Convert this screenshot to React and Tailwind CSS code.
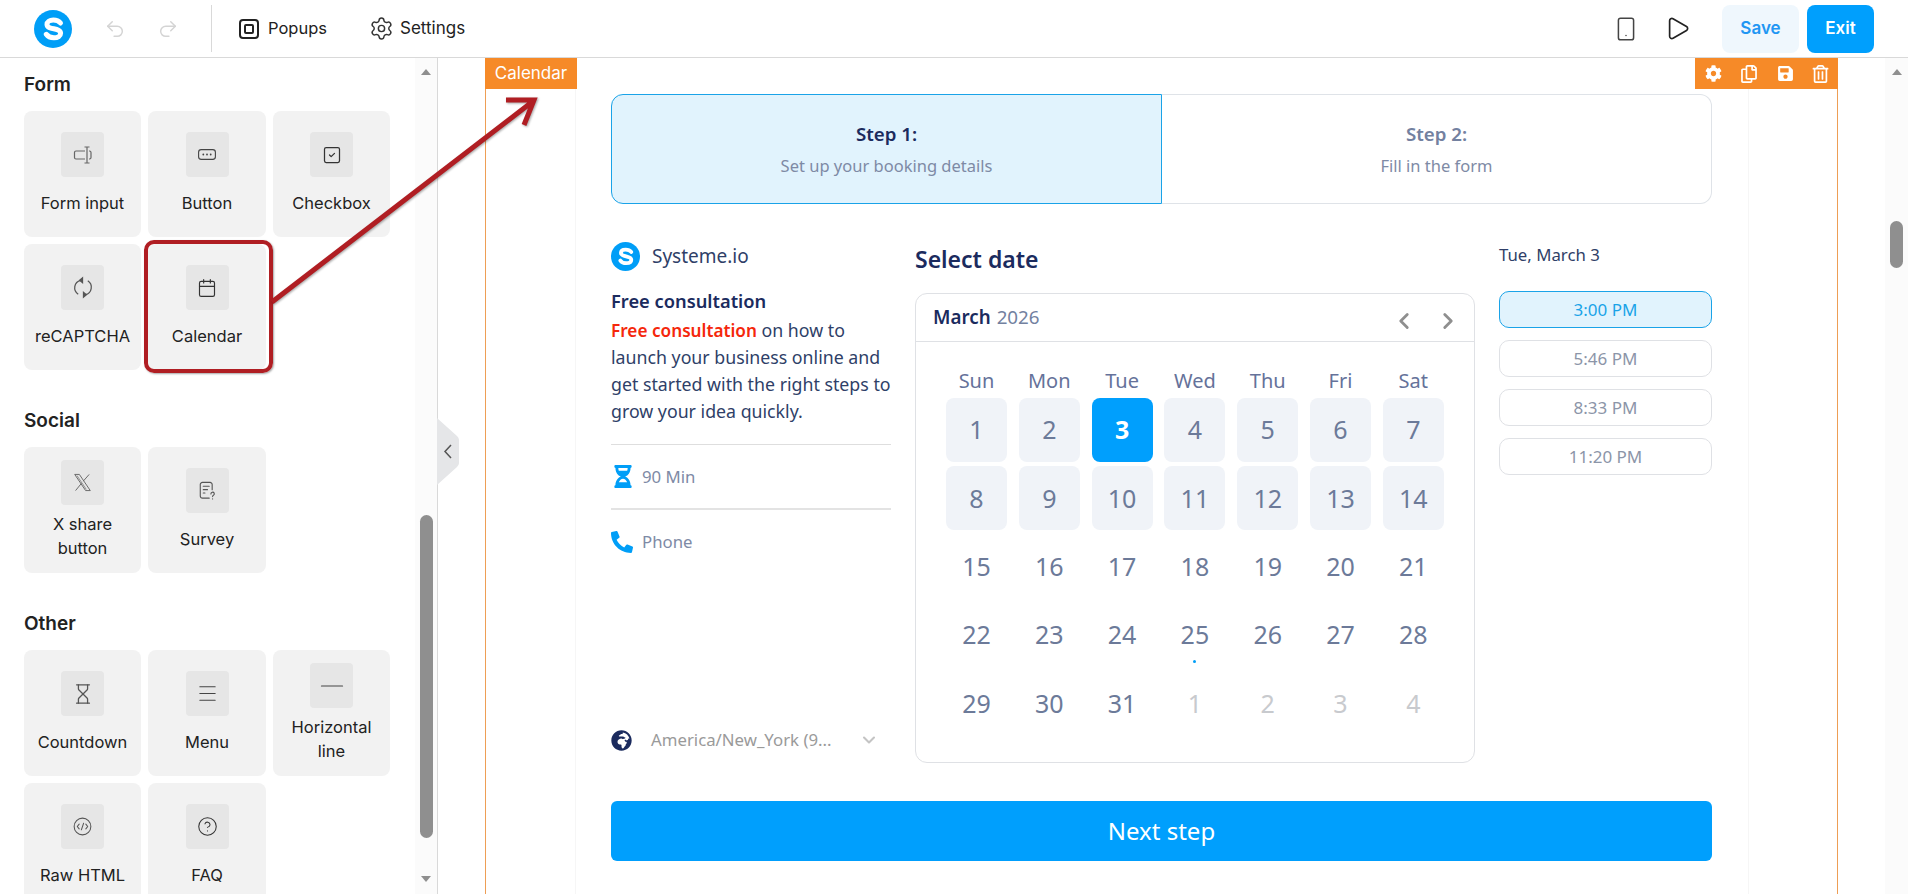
import { Undo2, Redo2, Settings, Smartphone, Play, SquareCheck, Calendar, Hourglass, Menu, Minus, CircleHelp, ChevronLeft, ChevronRight, ChevronDown } from 'lucide-react';
import { FaCog, FaRegCopy, FaSave, FaRegTrashAlt, FaHourglassHalf, FaPhoneAlt, FaGlobeAfrica } from 'react-icons/fa';

const Logo = ({ className }) => (
  <svg viewBox="0 0 38 38" className={className}>
    <circle cx="19" cy="19" r="19" fill="#009ef7" />
    <path d="M26.500 13c-1.500-1.900-4.200-3-7.200-3-3.700 0-6.300 1.700-6.300 4.400 0 5.800 13.600 3 13.600 8.900 0 2.800-2.800 4.500-6.700 4.500-3.200 0-6-1.200-7.600-3.500" fill="none" stroke="#fff" strokeWidth="5" strokeLinecap="round" />
  </svg>
);

const FormInputIcon = () => (
  <svg viewBox="0 0 20 18" className="w-[20px] h-[18px]" fill="none" stroke="#666" strokeWidth="1.200">
    <path d="M12 5H3a1.500 1.500 0 0 0-1.500 1.500v5A1.500 1.500 0 0 0 3 13h9" />
    <path d="M14 1v16M11.500 1h5M11.500 17h5" />
    <path d="M16 5h.5A1.500 1.500 0 0 1 18 6.500v5a1.500 1.500 0 0 1-1.500 1.500H16" />
  </svg>
);

const ButtonIcon = () => (
  <svg viewBox="0 0 18 11" className="w-[18px] h-[11px]" fill="none" stroke="#444" strokeWidth="1.100">
    <rect x="0.600" y="0.600" width="16.800" height="9.800" rx="2.600" />
    <circle cx="5.300" cy="5.500" r="0.900" fill="#444" stroke="none" />
    <circle cx="9" cy="5.500" r="0.900" fill="#444" stroke="none" />
    <circle cx="12.700" cy="5.500" r="0.900" fill="#444" stroke="none" />
  </svg>
);

const RecaptchaIcon = () => (
  <svg viewBox="0 0 20 24" className="w-[20px] h-[23px]" fill="none" stroke="#555" strokeWidth="1.300">
    <path d="M7.500 4.500A8 8 0 0 0 5 19" />
    <path d="M12.500 19.500A8 8 0 0 0 15 5" />
    <path d="M9.500 2v5l-3-2.500z" fill="#555" />
    <path d="M10.500 22v-5l3 2.500z" fill="#555" />
  </svg>
);

const XIcon = () => (
  <svg viewBox="0 0 20 20" className="w-[19px] h-[19px]" fill="none" stroke="#666" strokeWidth="1">
    <path d="M1.800 1.500h4.900l11.500 17h-4.900z" />
    <path d="M17 1.500 10.800 8.600M8.900 10.900 2.700 18.500" />
    <path d="M4.200 2.700 14 17.300" strokeWidth="0.700" />
  </svg>
);

const SurveyIcon = () => (
  <svg viewBox="0 0 20 22" className="w-[17px] h-[19px]" fill="none" stroke="#555" strokeWidth="1.300" strokeLinecap="round">
    <path d="M12 20H4a2.500 2.500 0 0 1-2.500-2.500V4A2.500 2.500 0 0 1 4 1.500h9A2.500 2.500 0 0 1 15.500 4v6" />
    <path d="M5 6h7M5 10h5M5 14h2" />
    <path d="M14 15a2 2 0 1 1 3 1.700c-.7.400-1 .8-1 1.500M16 20.800v.1" />
  </svg>
);

const CodeCircleIcon = () => (
  <svg viewBox="0 0 20 20" className="w-[19px] h-[19px]" fill="none" stroke="#555" strokeWidth="1.100" strokeLinecap="round" strokeLinejoin="round">
    <circle cx="10" cy="10" r="8.800" />
    <path d="M6.500 7.500 4.500 10l2 2.500M13.500 7.500l2 2.500-2 2.500M11.200 6.500 8.800 13.500" />
  </svg>
);

const sections = [
  {
    title: 'Form',
    cls: 'mt-0',
    items: [
      { label: 'Form input', icon: <FormInputIcon /> },
      { label: 'Button', icon: <ButtonIcon /> },
      { label: 'Checkbox', icon: <SquareCheck className="w-[20px] h-[20px] text-[#333]" strokeWidth={1.5} /> },
      { label: 'reCAPTCHA', icon: <RecaptchaIcon /> },
      { label: 'Calendar', icon: <Calendar className="w-[20px] h-[20px] text-[#333]" strokeWidth={1.4} /> },
    ],
  },
  {
    title: 'Social',
    cls: 'mt-[39px]',
    items: [
      { label: 'X share\nbutton', two: true, icon: <XIcon /> },
      { label: 'Survey', icon: <SurveyIcon /> },
    ],
  },
  {
    title: 'Other',
    cls: 'mt-[39px]',
    items: [
      { label: 'Countdown', icon: <Hourglass className="w-[22px] h-[22px] text-[#555]" strokeWidth={1.4} /> },
      { label: 'Menu', icon: <Menu className="w-[23px] h-[23px] text-[#444]" strokeWidth={1.1} /> },
      { label: 'Horizontal\nline', two: true, icon: <Minus className="w-[36px] h-[36px] text-[#444]" strokeWidth={0.8} /> },
      { label: 'Raw HTML', icon: <CodeCircleIcon /> },
      { label: 'FAQ', icon: <CircleHelp className="w-[21px] h-[21px] text-[#333]" strokeWidth={1.2} /> },
    ],
  },
];

const weekdays = ['Sun', 'Mon', 'Tue', 'Wed', 'Thu', 'Fri', 'Sat'];
const days = Array.from({ length: 31 }, (_, i) => i + 1);
const slots = ['3:00 PM', '5:46 PM', '8:33 PM', '11:20 PM'];

const Tile = ({ item }) => (
  <div className={`h-[126px] rounded-lg bg-[#f2f2f2] flex flex-col items-center ${item.two ? 'pt-[13px] gap-[7px]' : 'pt-[21px] gap-[14px]'}`}>
    <div className="w-[43px] h-[45px] shrink-0 rounded bg-[#e6e6e6] flex items-center justify-center">{item.icon}</div>
    <div className="text-[16.5px] leading-6 text-center text-[#222] whitespace-pre-line">{item.label}</div>
  </div>
);

const UpArrow = () => <div className="w-0 h-0 border-x-[5.5px] border-x-transparent border-b-[6px] border-b-[#8f8f8f]" />;
const DownArrow = () => <div className="w-0 h-0 border-x-[5.5px] border-x-transparent border-t-[6px] border-t-[#8f8f8f]" />;

const DayCell = ({ day }) => {
  if (day === 3) {
    return <div className="h-[64px] rounded-lg bg-[#009ffd] text-white font-bold text-[25px] flex items-center justify-center">3</div>;
  }
  return (
    <div className={`relative h-[64px] rounded-lg text-[25px] text-[#6c7a99] flex items-center justify-center ${day <= 14 ? 'bg-[#f0f3f8]' : ''}`}>
      {day}
      {day === 25 && <span className="absolute left-[29px] top-[57px] w-[3px] h-[3px] rounded-full bg-[#009ef7]" />}
    </div>
  );
};

const App = () => {
  return (
    <div className="relative w-[1908px] h-[894px] overflow-hidden bg-white font-['Inter',sans-serif]">
      {/* top bar */}
      <header className="h-[58px] border-b border-[#d9d9d9] flex items-center pl-[34px] pr-[34px]">
        <Logo className="w-[38px] h-[38px]" />
        <Undo2 className="w-[22px] h-[22px] ml-[32px] text-[#d4d4d4]" strokeWidth={1.6} />
        <Redo2 className="w-[22px] h-[22px] ml-[31px] text-[#d4d4d4]" strokeWidth={1.6} />
        <div className="w-px h-[47px] bg-[#d9d9d9] ml-[32px]" />
        <div className="ml-[27px] w-[20px] h-[20px] rounded-[4px] border-2 border-[#222] flex items-center justify-center">
          <div className="w-[10px] h-[10px] rounded-[2px] border-2 border-[#222]" />
        </div>
        <span className="ml-[9px] text-[16.5px] text-[#222]">Popups</span>
        <Settings className="ml-[42px] w-[25px] h-[25px] text-[#333]" strokeWidth={1.4} />
        <span className="ml-[6px] text-[17px] text-[#222]">Settings</span>
        <div className="ml-auto flex items-center">
          <Smartphone className="w-[26px] h-[26px] text-[#444]" strokeWidth={1.4} />
          <Play className="ml-[25px] w-[27px] h-[27px] text-[#222]" strokeWidth={1.5} />
          <button className="ml-[31px] w-[77px] h-[48px] rounded-lg bg-[#eff7fd] text-[#2196f3] text-[17px] font-semibold">Save</button>
          <button className="ml-[8px] w-[67px] h-[48px] rounded-lg bg-[#009ffd] text-white text-[17px] font-semibold">Exit</button>
        </div>
      </header>

      <div className="flex h-[836px]">
        {/* left panel */}
        <aside className="w-[438px] shrink-0 border-r border-[#d9d9d9] flex overflow-hidden">
          <div className="w-[415px] pl-[24px] pt-[15px]">
            {sections.map((s) => (
              <section key={s.title} className={s.cls}>
                <h3 className="h-[24px] leading-6 text-[19px] font-semibold text-[#222] mb-[14px]">{s.title}</h3>
                <div className="grid grid-cols-[117px_118px_117px] gap-[7px]">
                  {s.items.map((item) => <Tile key={item.label} item={item} />)}
                </div>
              </section>
            ))}
          </div>
          <div className="w-[22px] bg-[#fbfbfb] flex flex-col items-center pt-[11px] pb-[12px]">
            <UpArrow />
            <div className="w-[13px] h-[323px] rounded-full bg-[#8f8f8f] mt-[440px]" />
            <div className="mt-auto"><DownArrow /></div>
          </div>
        </aside>

        {/* canvas */}
        <main className="flex-1 overflow-hidden pl-[47px]">
          <div className="relative w-[1353px] h-full border-x border-[#ee9e55]">
            <div className="absolute left-[-1px] top-0 w-[92px] h-[31px] bg-[#f68a28] text-white text-[17px] flex items-center justify-center">Calendar</div>
            <div className="absolute right-[-1px] top-0 w-[143px] h-[31px] pl-[1px] bg-[#f68a28] text-white flex items-center justify-center gap-[18.5px]">
              <FaCog className="w-[17px] h-[17px]" />
              <FaRegCopy className="w-[18px] h-[18px]" />
              <FaSave className="w-[17px] h-[17px]" />
              <FaRegTrashAlt className="w-[17px] h-[18px]" />
            </div>
            <div className="ml-[89px] w-[1174px] min-h-[836px] border-x border-[#f6f6f6] pt-[36px] pl-[35px] pr-[36px] font-['Noto_Sans',sans-serif]">
              {/* steps */}
              <div className="flex h-[110px]">
                <div className="w-[551px] rounded-l-xl border border-[#1aa3e8] bg-[#e1f3fd] flex flex-col items-center justify-center">
                  <div className="text-[18.7px] font-semibold text-[#1b2b5e]">Step 1:</div>
                  <div className="mt-[6px] text-[16.5px] text-[#7e8aa5]">Set up your booking details</div>
                </div>
                <div className="flex-1 rounded-r-xl border border-l-0 border-[#dfe3e8] flex flex-col items-center justify-center">
                  <div className="text-[18.7px] font-semibold text-[#7381a0]">Step 2:</div>
                  <div className="mt-[6px] text-[16.5px] text-[#7e8aa5]">Fill in the form</div>
                </div>
              </div>

              <div className="flex mt-[38px]">
                {/* details */}
                <div className="w-[280px] h-[521px] flex flex-col">
                  <div className="flex items-center h-[29px]">
                    <Logo className="w-[29px] h-[29px]" />
                    <span className="ml-[12px] text-[19px] text-[#2f3f68]">Systeme.io</span>
                  </div>
                  <h4 className="mt-[16px] text-[18.3px] leading-[27px] font-semibold text-[#1b2b5e]">Free consultation</h4>
                  <p className="mt-[3px] text-[17.75px] leading-[27px] text-[#2f3f68]">
                    <span className="text-[17.2px] font-semibold text-[#f5270b]">Free consultation</span> on how to launch your business online and get started with the right steps to grow your idea quickly.
                  </p>
                  <div className="mt-[19px] h-px bg-[#dedede]" />
                  <div className="h-[63px] flex items-center">
                    <FaHourglassHalf className="ml-[3px] w-[18px] h-[23px] text-[#009ef7]" />
                    <span className="ml-[10px] text-[16.8px] text-[#7e8aa5]">90 Min</span>
                  </div>
                  <div className="h-[2px] bg-[#e3e3e3]" />
                  <div className="h-[64px] flex items-center">
                    <FaPhoneAlt className="w-[22px] h-[22px] text-[#009ef7]" />
                    <span className="ml-[9px] text-[16.8px] text-[#7e8aa5]">Phone</span>
                  </div>
                  <div className="mt-auto mb-[12px] flex items-center h-[22px]">
                    <FaGlobeAfrica className="w-[21px] h-[21px] text-[#1b2b5e]" />
                    <span className="ml-[19px] text-[16.8px] text-[#9a9a9a]">America/New_York (9...</span>
                    <ChevronDown className="ml-[27px] w-[20px] h-[20px] text-[#c4c4c4]" strokeWidth={2.5} />
                  </div>
                </div>

                {/* calendar */}
                <div className="ml-[24px] w-[560px]">
                  <h2 className="h-[36px] mt-[-1px] leading-[36px] text-[23px] font-semibold text-[#1b2b5e]">Select date</h2>
                  <div className="mt-[16px] h-[470px] rounded-xl border border-[#dfe1e5]">
                    <div className="h-[48px] border-b border-[#dfe1e5] flex items-center pl-[17px] pr-[13px]">
                      <span className="text-[18.8px] font-semibold text-[#1b2b5e]">March</span>
                      <span className="ml-[6px] text-[18.8px] text-[#7381a0]">2026</span>
                      <ChevronLeft className="ml-auto mt-[6px] w-[26px] h-[26px] text-[#8f8f8f]" strokeWidth={2.6} />
                      <ChevronRight className="ml-[18px] mt-[6px] w-[26px] h-[26px] text-[#8f8f8f]" strokeWidth={2.6} />
                    </div>
                    <div className="pt-[27px] pl-[30px] grid grid-cols-[repeat(7,61px)] gap-x-[11.8px]">
                      {weekdays.map((d) => (
                        <div key={d} className="h-[24px] mb-[5px] leading-6 text-center text-[20px] text-[#65729a]">{d}</div>
                      ))}
                    </div>
                    <div className="pl-[30px] grid grid-cols-[repeat(7,61px)] gap-x-[11.8px] gap-y-[4.4px]">
                      {days.map((d) => <DayCell key={d} day={d} />)}
                      {[1, 2, 3, 4].map((d) => (
                        <div key={`next-${d}`} className="h-[64px] text-[25px] text-[#c8cace] flex items-center justify-center">{d}</div>
                      ))}
                    </div>
                  </div>
                </div>

                {/* times */}
                <div className="ml-[24px] flex-1">
                  <div className="mt-[1px] h-[24px] leading-6 text-[16.8px] text-[#2f3f68]">Tue, March 3</div>
                  <div className="mt-[24px] flex flex-col gap-[12px]">
                    {slots.map((t, i) => (
                      <div key={t} className={`h-[37px] rounded-[10px] border text-[17px] flex items-center justify-center ${i === 0 ? 'border-[#1aa3e8] bg-[#e1f3fd] text-[#1aa3e8]' : 'border-[#dfe1e5] text-[#8c95a8]'}`}>{t}</div>
                    ))}
                  </div>
                </div>
              </div>

              <button className="mt-[38px] w-full h-[60px] rounded-md bg-[#009ffd] text-white text-[24px]">Next step</button>
            </div>
          </div>
        </main>

        {/* page scrollbar */}
        <div className="w-[23px] shrink-0 bg-[#fbfbfb] flex flex-col items-center pt-[11px]">
          <UpArrow />
          <div className="w-[13px] h-[47px] rounded-full bg-[#8f8f8f] mt-[146px]" />
        </div>
      </div>

      {/* collapse tab */}
      <svg viewBox="0 0 22 67" className="absolute left-[437px] top-[418px] w-[22px] h-[67px]">
        <path d="M0 0 20 18a6 6 0 0 1 2 5v21a6 6 0 0 1-2 5L0 67z" fill="#e5e6e8" />
        <path d="M14 27 8 33.500 14 40" fill="none" stroke="#555" strokeWidth="1.500" />
      </svg>

      {/* annotation */}
      <div className="absolute left-[144px] top-[240px] w-[129px] h-[133px] rounded-[10px] border-[4px] border-[#b01e23] shadow-[1px_1px_2px_rgba(0,0,0,0.35)]" />
      <svg className="absolute left-0 top-0 w-[1908px] h-[894px] pointer-events-none" viewBox="0 0 1908 894">
        <path d="M272 302 532 102M506 100H534L524 125" fill="none" stroke="#b01e23" strokeWidth="5" strokeLinejoin="miter" style={{ filter: 'drop-shadow(1px 1px 1px rgba(0,0,0,0.35))' }} />
      </svg>
    </div>
  );
};

export default App;
